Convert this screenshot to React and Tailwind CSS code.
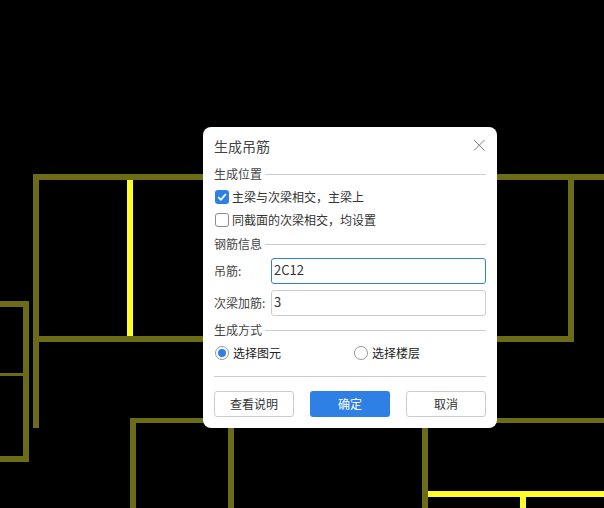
const FONT = "font-['Noto_Sans_CJK_SC','Liberation_Sans',sans-serif]";

// drawing behind the dialog: [x, y, w, h]
const olive = [
  [33, 174, 571, 6],
  [33, 174, 6, 254],
  [39, 336, 535, 6],
  [568, 174, 6, 168],
  [0, 301, 29, 6],
  [23, 301, 6, 161],
  [0, 456, 29, 6],
  [130, 418, 474, 5],
  [130, 418, 6, 90],
  [228, 423, 6, 85],
  [422, 423, 6, 85],
];
const bright = [
  [127, 180, 6, 156],
  [428, 491, 176, 6],
  [520, 497, 6, 11],
];

function Plan() {
  return (
    <svg width="604" height="508" className="block">
      {olive.map(([x, y, w, h], i) => (
        <rect key={i} x={x} y={y} width={w} height={h} fill="#6c6c16" />
      ))}
      <rect x="0" y="373" width="23" height="3" fill="#6c6c16" />
      {bright.map(([x, y, w, h], i) => (
        <rect key={i} x={x} y={y} width={w} height={h} fill="#ffff28" />
      ))}
    </svg>
  );
}

function Section({ title }) {
  return (
    <div className="flex items-center h-4 gap-[3px] text-xs leading-4 text-[#444]">
      <span>{title}</span>
      <div className="flex-1 h-px bg-[#cccccc]" />
    </div>
  );
}

function Check({ checked, label }) {
  return (
    <div className="flex items-center h-[14px] gap-[3px] pl-px text-xs text-[#333]">
      {checked ? (
        <span className="w-[14px] h-[14px] rounded-[3px] bg-[#2f80e4] flex items-center justify-center">
          <svg width="10" height="10" viewBox="0 0 10 10" fill="none">
            <path d="M1.2 5.2 L3.9 7.8 L8.8 2.2" stroke="#fff" strokeWidth="1.8" />
          </svg>
        </span>
      ) : (
        <span className="w-[14px] h-[14px] rounded-[3px] border border-[#8c8c8c] bg-white" />
      )}
      <span>{label}</span>
    </div>
  );
}

function Radio({ checked, label, className = '' }) {
  return (
    <div className={`flex items-center gap-[4px] text-xs text-[#222] ${className}`}>
      <span className="w-[14px] h-[14px] rounded-full border border-[#999] bg-white flex items-center justify-center">
        {checked && <span className="w-2 h-2 rounded-full bg-[#2f80e4]" />}
      </span>
      <span>{label}</span>
    </div>
  );
}

function Field({ label, value, focused }) {
  return (
    <div className="flex items-center h-[26px]">
      <span className="w-[57px] text-xs text-[#444]">{label}</span>
      <input
        readOnly
        value={value}
        className={`flex-1 min-w-0 h-[26px] rounded-[3px] border px-[2px] pb-[3px] text-[13px] text-[#333] outline-none ${
          focused ? 'border-[#2f80e4]' : 'border-[#cccccc]'
        }`}
      />
    </div>
  );
}

function Btn({ children, primary }) {
  return (
    <button
      type="button"
      className={`w-20 h-[26px] rounded-[3px] text-xs ${
        primary ? 'bg-[#2f80e4] text-white' : 'border border-[#cccccc] bg-white text-[#333]'
      }`}
    >
      {children}
    </button>
  );
}

export default function App() {
  return (
    <div className={`relative w-[604px] h-[508px] overflow-hidden bg-black ${FONT}`}>
      <Plan />

      {/* dialog */}
      <div className="absolute left-[203px] top-[127px] w-[294px] h-[301px] rounded-lg bg-white px-[11px] flex flex-col">
        <div className="flex items-center justify-between h-[38px] pb-px">
          <span className="text-sm text-[#444]">生成吊筋</span>
          <svg width="14" height="14" viewBox="0 0 14 14" fill="none">
            <path d="M2 1 L12.5 11.5 M12.5 1 L2 11.5" stroke="#808080" strokeWidth="1" />
          </svg>
        </div>

        <div className="mt-[1px]">
          <Section title="生成位置" />
        </div>
        <div className="mt-[8px] flex flex-col gap-[9px]">
          <Check checked label={'主梁与次梁相交\uFF0C主梁上'} />
          <Check label={'同截面的次梁相交\uFF0C均设置'} />
        </div>

        <div className="mt-[9px]">
          <Section title="钢筋信息" />
        </div>
        <div className="mt-[6px] flex flex-col gap-[6px]">
          <Field label="吊筋:" value="2C12" focused />
          <Field label="次梁加筋:" value="3" />
        </div>

        <div className="mt-[6px]">
          <Section title="生成方式" />
        </div>
        <div className="mt-[7px] flex items-center h-[16px] pl-px">
          <Radio checked label="选择图元" className="w-[139px]" />
          <Radio label="选择楼层" />
        </div>

        <div className="mt-[15px] h-px bg-[#cccccc]" />

        <div className="mt-[14px] flex justify-between">
          <Btn>查看说明</Btn>
          <Btn primary>确定</Btn>
          <Btn>取消</Btn>
        </div>
      </div>
    </div>
  );
}
